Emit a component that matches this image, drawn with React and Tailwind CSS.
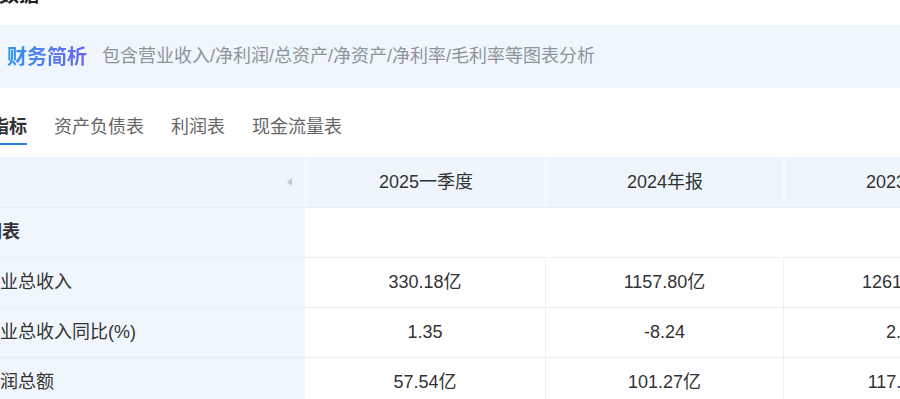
import React from 'react';

const periods = ['2025一季度', '2024年报', '2023年报'];

const rows = [
  { label: '营业总收入', values: ['330.18亿', '1157.80亿', '1261.10亿'] },
  { label: '营业总收入同比(%)', values: ['1.35', '-8.24', '2.35'] },
  { label: '利润总额', values: ['57.54亿', '101.27亿', '117.89亿'] },
];

const tabs = ['主要指标', '资产负债表', '利润表', '现金流量表'];

function Row({ children, className = '' }) {
  return (
    <div className={`grid grid-cols-[350px_240px_238px_240px] h-[50px] ${className}`}>
      {children}
    </div>
  );
}

export default function App() {
  return (
    <div className="w-[900px] h-[399px] overflow-hidden bg-white font-['Liberation_Sans','Noto_Sans_CJK_SC',sans-serif] text-[#333]">
      <div className="-ml-[45px] w-[1100px]">
        <h2 className="-mt-[15px] pl-[4px] text-[20px] leading-[20px] font-bold text-[#222]">财务数据</h2>

        <div className="mt-[20px] h-[63px] bg-[#f0f6fd] flex items-center pl-[52px]">
          <span className="text-[20px] font-bold bg-linear-to-r from-[#2592f2] to-[#6a63ee] bg-clip-text text-transparent">
            财务简析
          </span>
          <span className="ml-[15px] text-[18px] text-[#8f939b]">
            包含营业收入/净利润/总资产/净资产/净利率/毛利率等图表分析
          </span>
        </div>

        <div className="mt-[27px] flex gap-[27px]">
          {tabs.map((t, i) => (
            <div
              key={t}
              className={`text-[18px] leading-[24px] pb-[4px] border-b-2 ${
                i === 0 ? 'border-[#2f7fe0] font-bold text-[#333]' : 'border-transparent text-[#666]'
              }`}
            >
              {t}
            </div>
          ))}
        </div>

        <div className="mt-[12px] text-[18px]">
          <Row className="bg-[#eef5fd]">
            <div className="flex items-center justify-end pr-[12px]">
              <svg width="7" height="10" viewBox="0 0 7 10">
                <path d="M6 1 L1 5 L6 9 Z" fill="#c3c8d0" />
              </svg>
            </div>
            {periods.map((p) => (
              <div key={p} className="flex items-center justify-center border-l-2 border-[#f5f9fe]">
                {p}
              </div>
            ))}
          </Row>

          <Row className="border-t border-[#e9eef4]">
            <div className="bg-[#f0f6fd] flex items-center pl-[11px] font-bold">利润表</div>
            <div />
            <div />
            <div />
          </Row>

          {rows.map((r) => (
            <Row key={r.label} className="border-t border-[#e9eef4]">
              <div className="bg-[#f0f6fd] flex items-center pl-[27px]">{r.label}</div>
              {r.values.map((v, i) => (
                <div
                  key={i}
                  className={`flex items-center justify-center ${i > 0 ? 'border-l border-[#eef0f3]' : ''}`}
                >
                  {v}
                </div>
              ))}
            </Row>
          ))}
        </div>
      </div>
    </div>
  );
}
